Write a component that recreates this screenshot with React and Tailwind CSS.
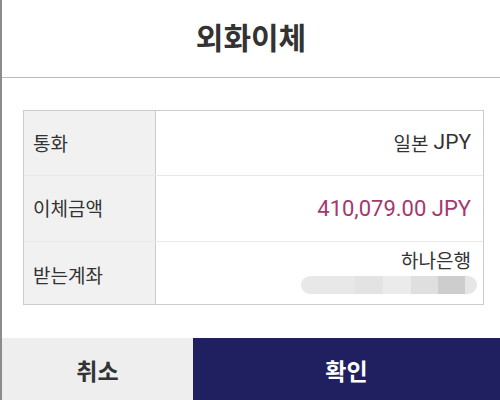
export default function App() {
  const font = { fontFamily: '"Noto Sans CJK KR", "Noto Sans", sans-serif' };
  const latin = { fontFamily: 'Roboto, "Noto Sans", sans-serif' };
  return (
    <div className="w-[500px] h-[400px] flex bg-white overflow-hidden" style={font}>
      <div className="w-[2px] h-full bg-[#8c8c8c]" />
      <div className="flex-1 flex flex-col bg-white rounded-tl-[4px]">
        <div className="h-[78px] flex items-center justify-center border-b border-[#bdbdbd]">
          <h1 className="text-[30px] font-bold text-[#333333] leading-none -mt-[6px]">외화이체</h1>
        </div>
        <div className="flex-1 pt-[32px] pl-[21px] pr-[16px]">
          <div className="border border-[#cccccc] text-[19px] text-[#333333]">
            <div className="flex h-[65px] border-b border-[#e8e8e8]">
              <div className="w-[132px] bg-[#f1f1f1] border-r border-[#cccccc] flex items-center pl-[9px]">통화</div>
              <div className="flex-1 flex items-center justify-end pr-[12px] text-[19px]">
                <span>일본</span>
                <span className="text-[21px] ml-[5px]" style={latin}>JPY</span>
              </div>
            </div>
            <div className="flex h-[66px] border-b border-[#e8e8e8]">
              <div className="w-[132px] bg-[#f1f1f1] border-r border-[#cccccc] flex items-center pl-[9px]">이체금액</div>
              <div className="flex-1 flex items-center justify-end pr-[12px] text-[22px] text-[#a5386e]" style={latin}>410,079.00 JPY</div>
            </div>
            <div className="flex h-[62px]">
              <div className="w-[132px] bg-[#f1f1f1] border-r border-[#cccccc] flex items-center pl-[9px] pt-[4px]">받는계좌</div>
              <div className="flex-1 flex flex-col items-end pr-[6px] pt-[6px]">
                <span className="text-[19px] leading-[24px] pr-[6px]">하나은행</span>
                <div className="mt-[4px] flex h-[18px] w-[176px] rounded-full overflow-hidden opacity-90">
                  <div className="flex-1 bg-[#e6e6e6]" />
                  <div className="w-[28px] bg-[#e1e1e1]" />
                  <div className="w-[28px] bg-[#e9e9e9]" />
                  <div className="w-[27px] bg-[#dcdcdc]" />
                  <div className="w-[27px] bg-[#c8c8c8]" />
                  <div className="w-[12px] bg-[#e4e4e4]" />
                </div>
              </div>
            </div>
          </div>
        </div>
        <div className="h-[62px] flex">
          <div className="w-[191px] bg-[#eeeeee] flex items-center justify-center text-[23px] font-bold text-[#333333] pt-[3px]">취소</div>
          <div className="flex-1 bg-[#202060] flex items-center justify-center text-[23px] font-bold text-white pt-[3px]">확인</div>
        </div>
      </div>
    </div>
  );
}
